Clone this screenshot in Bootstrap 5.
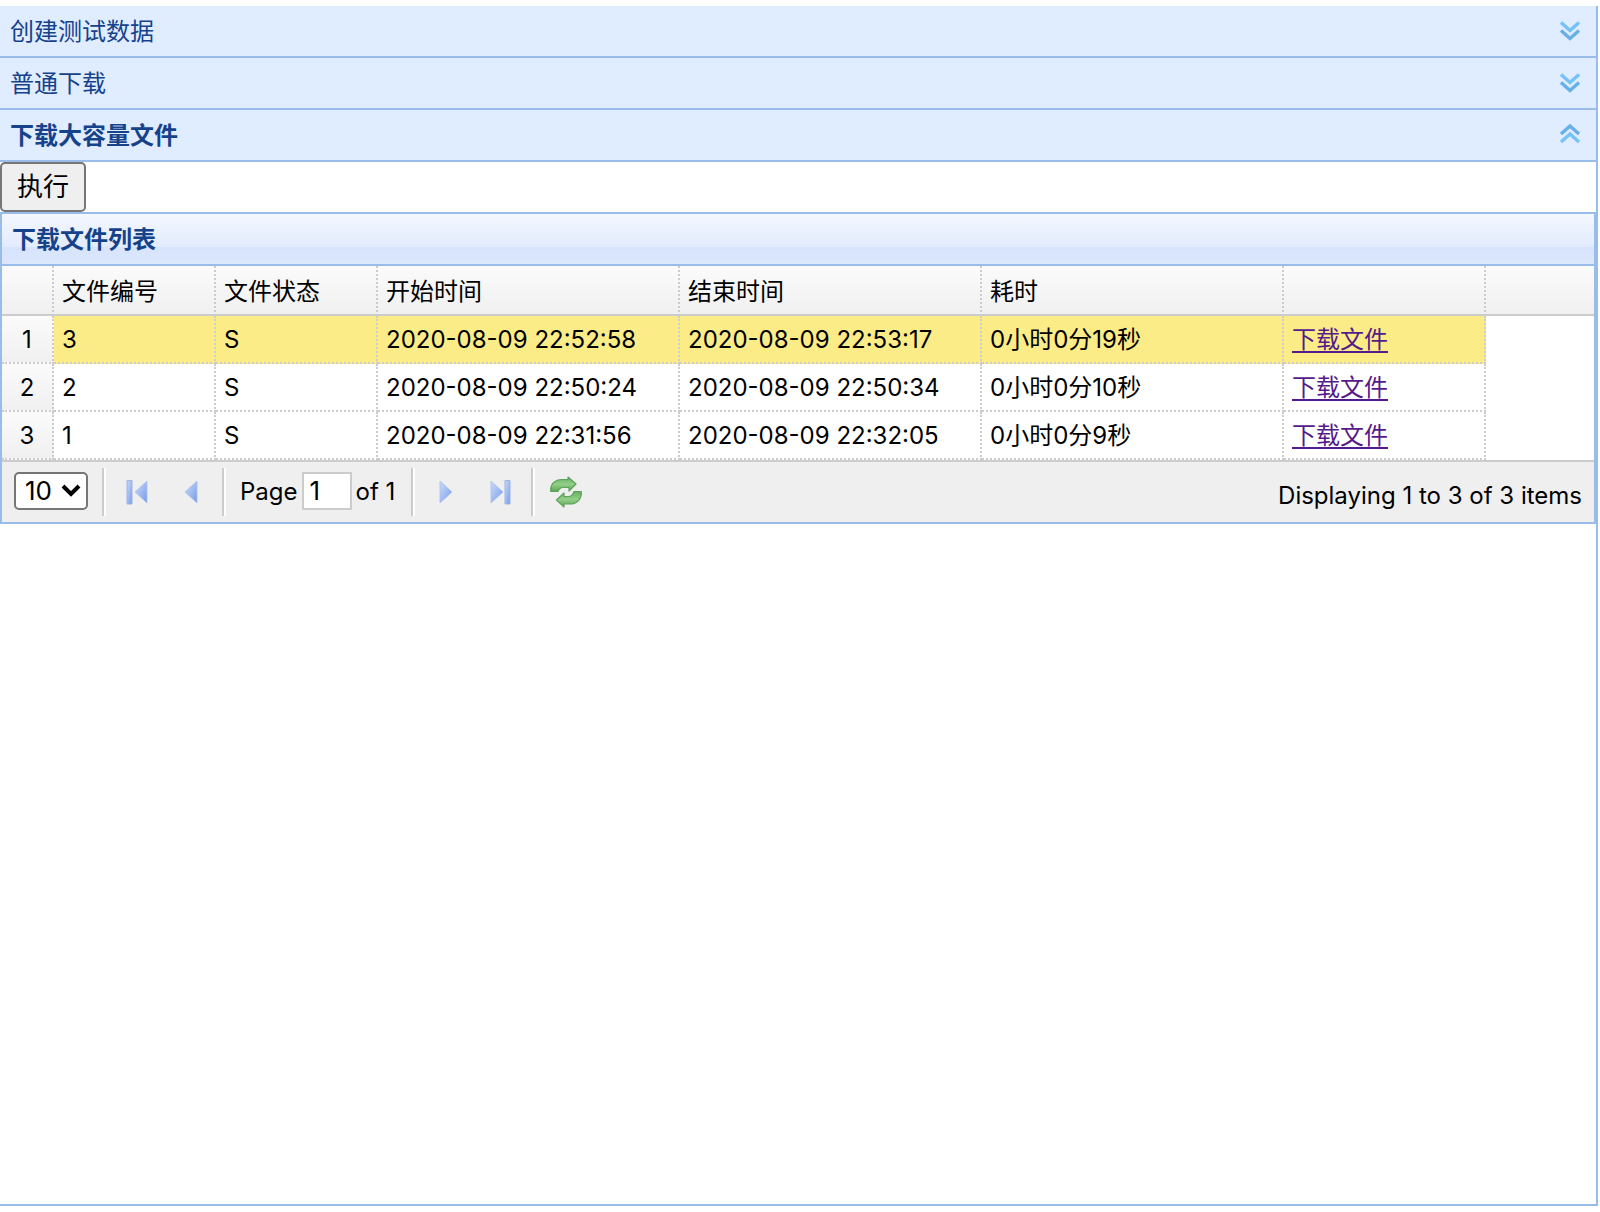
<!DOCTYPE html>
<html lang="zh-CN">
<head>
<meta charset="utf-8">
<meta name="viewport" content="width=device-width, initial-scale=1">
<title>下载大容量文件</title>
<link href="https://cdn.jsdelivr.net/npm/bootstrap@5.3.0/dist/css/bootstrap.min.css" rel="stylesheet">
<style>
  :root { --line: #99bce8; --navy: #15428b; --rule: #ccc; }
  body { font-family: Inter, "Noto Sans CJK SC", sans-serif; font-size: 24px; line-height: 32px; color: #000; background: #fff; padding: 6px 2px 6px 0; }
  .panels { border-right: 2px solid var(--line); border-bottom: 2px solid var(--line); }
  .fold-head { height: 52px; padding: 0 10px; border: 0; border-bottom: 2px solid var(--line); background: #e0ecff; color: var(--navy); font-weight: 400; }
  .fold-head.opened { font-weight: 700; }
  .fold-head span { padding-top: 2px; }
  .fold-head svg, .pager svg { width: 32px; height: 32px; display: block; }
  .run-btn { height: 50px; padding: 0 15px; border: 2px solid #767676; border-radius: 5px; background: #efefef; color: #000; font-size: 26px; line-height: 32px; }
  .list-panel { border: 2px solid var(--line); }
  .list-title { height: 52px; padding: 2px 10px 0; font-size: 24px; line-height: 32px; color: var(--navy); border-bottom: 2px solid var(--line); background: linear-gradient(#f4f8ff 0, #e2ebfd 66%, #d7e4fd 67%, #dce7fb 100%); }
  .files { width: 100%; table-layout: fixed; border-collapse: separate; border-spacing: 0; }
  .files th, .files td { height: 48px; padding: 2px 8px 0; font-weight: 400; white-space: nowrap; vertical-align: middle; border: 0 dotted var(--rule); border-width: 0 2px 2px 0; }
  .files thead td, .files thead th { height: 50px; padding-top: 4px; border-bottom: 2px solid var(--rule); background: linear-gradient(#fbfbfb, #f0f0f0); }
  .files tbody th { text-align: center; padding: 2px 0 0; background: linear-gradient(#fbfbfb, #f0f0f0); }
  .files thead td, .files thead th { border-bottom-style: solid; }
  .files .rest { border-right: 0; }
  .files tbody .rest { border-bottom: 0; }
  .files .picked td:not(.rest) { background-color: #fbec88; }
  .files a { color: #551a8b; text-underline-offset: 3px; text-decoration-thickness: 2px; }
  .w-num { width: 52px; } .w-short { width: 162px; } .w-time { width: 302px; } .w-link { width: 202px; }
  .pager { height: 62px; padding: 0 12px; border-top: 2px solid var(--rule); background: #efefef; }
  .size-box { width: 74px; height: 38px; margin: 0 14px 2px 0; }
  .size-box select { width: 100%; height: 100%; appearance: none; padding: 0 0 0 9px; border: 2px solid #767676; border-radius: 5px; background: #fff; color: #000; font-size: 26px; line-height: 32px; }
  .size-box svg { width: 20px; height: 16px; right: 7px; top: 11px; pointer-events: none; }
  .bar { width: 4px; height: 48px; border-left: 2px solid var(--rule); border-right: 2px solid #fff; }
  .tool { width: 54px; height: 48px; padding: 0; border: 0; background: none; display: flex; align-items: center; justify-content: center; }
  .pager label { margin-left: 14px; }
  .page-no { width: 50px; height: 38px; margin: 0 4px 2px; padding: 0 6px 2px; border: 2px solid var(--rule); border-radius: 0; color: #000; font-size: 26px; line-height: 32px; }
</style>
</head>
<body class="d-flex flex-column min-vh-100">
<svg width="0" height="0" class="position-absolute" aria-hidden="true">
  <defs>
    <linearGradient id="blue" x1="0" y1="0" x2="1" y2="1"><stop offset="0" stop-color="#cbdaf8"/><stop offset=".55" stop-color="#9db9f0"/><stop offset="1" stop-color="#7598e2"/></linearGradient>
    <linearGradient id="leaf" x1="0" y1="0" x2="0" y2="1"><stop offset="0" stop-color="#66ad62"/><stop offset=".5" stop-color="#93cf88"/><stop offset="1" stop-color="#5ba657"/></linearGradient>
    <symbol id="down" viewBox="0 0 32 32"><path d="M7 7.500l9 8 9-8" fill="none" stroke="#74c2f8" stroke-width="3.400"/><path d="M7 15.500l9 8 9-8" fill="none" stroke="#67afe9" stroke-width="3.400"/></symbol>
    <symbol id="up" viewBox="0 0 32 32"><path d="M7 15l9-8 9 8" fill="none" stroke="#67afe9" stroke-width="3.400"/><path d="M7 23l9-8 9 8" fill="none" stroke="#74c2f8" stroke-width="3.400"/></symbol>
    <symbol id="prev" viewBox="0 0 32 32"><path d="M22 5v22L10 16z" fill="url(#blue)" stroke="#a9bfec" stroke-width=".8"/></symbol>
    <symbol id="first" viewBox="0 0 32 32"><path d="M6 4.500h5v23.500H6z" fill="url(#blue)" stroke="#9db4e6"/><path d="M26 5v22L14 16z" fill="url(#blue)" stroke="#a9bfec" stroke-width=".8"/></symbol>
    <symbol id="next" viewBox="0 0 32 32"><path d="M10 5v22l12-11z" fill="url(#blue)" stroke="#a9bfec" stroke-width=".8"/></symbol>
    <symbol id="last" viewBox="0 0 32 32"><path d="M21 4.500h5v23.500h-5z" fill="url(#blue)" stroke="#9db4e6"/><path d="M7 5v22l12-11z" fill="url(#blue)" stroke="#a9bfec" stroke-width=".8"/></symbol>
    <symbol id="reload" viewBox="0 0 32 32"><g fill="url(#leaf)" stroke="#5ba35a" stroke-width="1.200" stroke-linejoin="round"><path d="M.8 15.500C0 8 5 3.500 12 3.500h6V1L26 8l-7 7v-3.500h-6c-3 0-4 1.500-5 4z"/><path d="M31.300 15.500C32 23 27 28 20 28h-6v3L6.500 24l7.500-7v3.500h5c3 0 4-2 5-5z"/></g></symbol>
  </defs>
</svg>

<main class="panels flex-grow-1" id="folds">
  <button type="button" class="fold-head w-100 d-flex align-items-center justify-content-between" aria-expanded="false"><span>创建测试数据</span><svg aria-hidden="true"><use href="#down"/></svg></button>
  <button type="button" class="fold-head w-100 d-flex align-items-center justify-content-between" aria-expanded="false"><span>普通下载</span><svg aria-hidden="true"><use href="#down"/></svg></button>
  <button type="button" class="fold-head opened w-100 d-flex align-items-center justify-content-between" data-bs-toggle="collapse" data-bs-target="#large" aria-expanded="true" aria-controls="large"><span>下载大容量文件</span><svg aria-hidden="true"><use href="#up"/></svg></button>

  <div class="collapse show" id="large">
    <button type="button" class="run-btn d-block">执行</button>
    <section class="list-panel">
      <h1 class="list-title d-flex align-items-center fw-bold m-0">下载文件列表</h1>
      <table class="files">
        <colgroup><col class="w-num"><col class="w-short"><col class="w-short"><col class="w-time"><col class="w-time"><col class="w-time"><col class="w-link"><col></colgroup>
        <thead>
          <tr><td></td><th scope="col">文件编号</th><th scope="col">文件状态</th><th scope="col">开始时间</th><th scope="col">结束时间</th><th scope="col">耗时</th><td></td><td class="rest"></td></tr>
        </thead>
        <tbody>
          <tr class="picked"><th scope="row">1</th><td>3</td><td>S</td><td>2020-08-09 22:52:58</td><td>2020-08-09 22:53:17</td><td>0小时0分19秒</td><td><a href="#">下载文件</a></td><td class="rest"></td></tr>
          <tr><th scope="row">2</th><td>2</td><td>S</td><td>2020-08-09 22:50:24</td><td>2020-08-09 22:50:34</td><td>0小时0分10秒</td><td><a href="#">下载文件</a></td><td class="rest"></td></tr>
          <tr><th scope="row">3</th><td>1</td><td>S</td><td>2020-08-09 22:31:56</td><td>2020-08-09 22:32:05</td><td>0小时0分9秒</td><td><a href="#">下载文件</a></td><td class="rest"></td></tr>
        </tbody>
      </table>
      <div class="pager d-flex align-items-center">
        <div class="size-box position-relative">
          <select aria-label="Items per page"><option>10</option><option>20</option><option>50</option></select>
          <svg class="position-absolute" viewBox="0 0 20 16" aria-hidden="true"><path d="M2 3l8 8 8-8" fill="none" stroke="#000" stroke-width="4"/></svg>
        </div>
        <span class="bar me-1"></span>
        <button type="button" class="tool" aria-label="First page"><svg><use href="#first"/></svg></button>
        <button type="button" class="tool" aria-label="Previous page"><svg><use href="#prev"/></svg></button>
        <span class="bar ms-1"></span>
        <label for="pageNo">Page</label>
        <input class="page-no" id="pageNo" type="text" value="1">
        <span>of 1</span>
        <span class="bar ms-3 me-1"></span>
        <button type="button" class="tool" aria-label="Next page"><svg><use href="#next"/></svg></button>
        <button type="button" class="tool" aria-label="Last page"><svg><use href="#last"/></svg></button>
        <span class="bar ms-1 me-1"></span>
        <button type="button" class="tool" aria-label="Refresh"><svg><use href="#reload"/></svg></button>
        <span class="ms-auto pt-2">Displaying 1 to 3 of 3 items</span>
      </div>
    </section>
  </div>
</main>
<script src="https://cdn.jsdelivr.net/npm/bootstrap@5.3.0/dist/js/bootstrap.bundle.min.js"></script>
</body>
</html>
